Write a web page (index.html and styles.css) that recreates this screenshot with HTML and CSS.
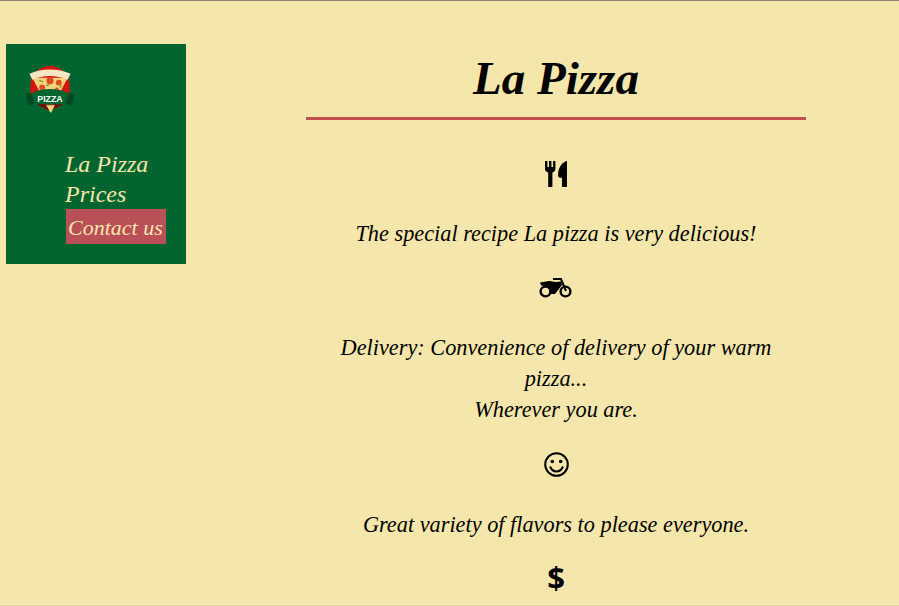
FILE: index.html
```html
<!DOCTYPE html>
<html lang="en">
<head>
  <meta charset="UTF-8">
  <meta name="viewport" content="width=device-width, initial-scale=1.0">
  <title>La Pizza</title>
  <link rel="stylesheet" href="styles.css">
</head>
<body>
  <!-- Sidebar -->
  <aside class="sidebar">
    <svg class="logo" viewBox="0 0 50 50" aria-label="Pizza logo">
      <path d="M5 22C5 10 14 1 25 1s20 9 20 21v14H5z" fill="#d3140f"/>
      <path d="M7 13l18 35 18-35z" fill="#f6d27a"/>
      <path d="M4 9c12-6 30-6 42 0l-3 6c-11-5-25-5-36 0z" fill="#f7e6c4"/>
      <circle cx="25" cy="16" r="3.600" fill="#e04a22"/>
      <circle cx="34" cy="18" r="3" fill="#e04a22"/>
      <circle cx="17" cy="23" r="3" fill="#e04a22"/>
      <circle cx="32" cy="25" r="2" fill="#e04a22"/>
      <path d="M14 16l4 1M21 21l3-1M37 21l-2 2" stroke="#6c9a2c" stroke-width="1.200"/>
      <path d="M11 40h28l-12 6h-4z" fill="#7a0c0a"/>
      <path d="M0 30l6-2 3 11-6 3zM50 30l-6-2-3 11 6 3z" fill="#024a22"/>
      <path d="M6 29c10-6 28-6 38 0l-3 9c-10 3-22 3-32 0z" fill="#026530"/>
      <text class="logo-text" x="25" y="38" text-anchor="middle">PIZZA</text>
      <path d="M21 41h9l-4 8z" fill="#f6d27a"/>
    </svg>
    <nav>
      <ul class="nav-list">
        <li><a href="#">La Pizza</a></li>
        <li><a href="#">Prices</a></li>
        <li><a class="active" href="#">Contact us</a></li>
      </ul>
    </nav>
  </aside>

  <!-- Main content -->
  <main class="content">
    <h1 class="title">La Pizza</h1>

    <div class="feature">
      <svg class="icon icon-food" viewBox="0 0 22 26">
        <path d="M0 0h2.400v6H4V0h2.400v6H8V0h2.400v8c0 2-1.500 3-3 3.400V26H3.200V11.400C1.500 11 0 10 0 8z"/>
        <path d="M22 0c-5 1-9 7-9 14 0 2 1 2.800 4 2.800V26h5z"/>
      </svg>
      <p>The special recipe La pizza is very delicious!</p>
    </div>

    <div class="feature">
      <svg class="icon icon-bike" viewBox="0 0 34 20">
        <circle cx="6.500" cy="13.500" r="4.900" fill="none" stroke="#000" stroke-width="2.400"/>
        <circle cx="26.500" cy="13.500" r="4.900" fill="none" stroke="#000" stroke-width="2.400"/>
        <path d="M1 4.500L10 3l7 1 5-.5 1 3.500-7 9h-4c0-5-4-8-10-8.500z"/>
        <path d="M14 1h8l5 12" fill="none" stroke="#000" stroke-width="2"/>
      </svg>
      <p>Delivery: Convenience of delivery of your warm<br>pizza...<br>Wherever you are.</p>
    </div>

    <div class="feature">
      <svg class="icon icon-smile" viewBox="0 0 25 25">
        <circle cx="12.500" cy="12.500" r="11.300" fill="none" stroke="#000" stroke-width="2"/>
        <circle cx="8.300" cy="9.500" r="1.800"/>
        <circle cx="16.700" cy="9.500" r="1.800"/>
        <path d="M6 14.500c1.500 3.500 3.800 4.900 6.500 4.900s5-1.400 6.500-4.900" fill="none" stroke="#000" stroke-width="2"/>
      </svg>
      <p>Great variety of flavors to please everyone.</p>
    </div>

    <div class="feature">
      <span class="icon-dollar">$</span>
    </div>
  </main>
</body>
</html>
```

FILE: styles.css
```css
html, body {
  height: 100%;
}
body {
  margin: 0;
  box-sizing: border-box;
  display: flex;
  align-items: flex-start;
  overflow: hidden;
  border-top: 1px solid #8c8672;
  border-bottom: 1px solid #e0d49e;
  background-color: #f5e7ab;
  color: #000;
  font-family: "Liberation Serif", serif;
  font-style: italic;
}

/* Sidebar */
.sidebar {
  flex: none;
  width: 180px;
  box-sizing: border-box;
  margin: 43px 0 0 6px;
  padding: 21px 20px 20px;
  background-color: #026530;
}
.logo {
  display: block;
  width: 50px;
  height: 49px;
  margin-left: -1px;
}
.logo-text {
  font-family: "Liberation Sans", sans-serif;
  font-style: normal;
  font-weight: bold;
  font-size: 9px;
  fill: #fff;
}
.nav-list {
  list-style: none;
  margin: 35px 0 0 39px;
  padding: 0;
}
.nav-list a {
  display: block;
  color: #f5e7ad;
  font-size: 24px;
  line-height: 30px;
  text-decoration: none;
}
.nav-list a.active {
  width: 100px;
  height: 35px;
  margin-left: 1px;
  line-height: 38px;
  padding-left: 2px;
  box-sizing: border-box;
  white-space: nowrap;
  font-size: 22px;
  background-color: #b94f57;
}

/* Main content */
.content {
  flex: none;
  width: 500px;
  margin-left: 120px;
  text-align: center;
  font-size: 22.3px;
}
.title {
  margin: 0;
  height: 119px;
  box-sizing: border-box;
  padding-top: 42px;
  border-bottom: 3px solid #c0504f;
  font-size: 47px;
  line-height: 70px;
  font-weight: bold;
}
.feature p {
  margin: 0;
  line-height: 31px;
}
.feature {
  padding-top: 23px;
}
.feature:first-of-type {
  padding-top: 38px;
}
.icon {
  display: block;
  margin: 0 auto 29px;
}
.icon-food {
  width: 22px;
  height: 26px;
  margin-top: 3px;
  margin-bottom: 31px;
}
.icon-bike {
  width: 34px;
  height: 20px;
  margin-top: 6px;
  margin-bottom: 34px;
}
.icon-smile {
  width: 25px;
  height: 25px;
  margin-top: 4px;
  margin-bottom: 32px;
}
.icon-dollar {
  display: block;
  margin-top: -1px;
  font-family: "Open Sans", sans-serif;
  font-style: normal;
  font-weight: bold;
  font-size: 31px;
  line-height: 30px;
}
```
